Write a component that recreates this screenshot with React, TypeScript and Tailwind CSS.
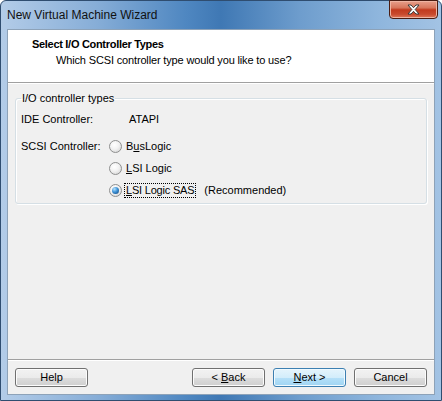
const font = "font-['Liberation_Sans',Arial,sans-serif]";

const Radio = ({ checked }: { checked?: boolean }) => (
  <span className="w-[13px] h-[13px] shrink-0 rounded-full border border-[#8e8f8f] bg-[radial-gradient(circle_at_40%_35%,#ffffff_0%,#f2f2f2_45%,#cdcdcd_100%)] flex items-center justify-center">
    {checked && (
      <span className="w-[7px] h-[7px] rounded-full bg-[radial-gradient(circle_at_35%_30%,#b4e2ff_0%,#3d92d6_45%,#0f3f73_100%)]" />
    )}
  </span>
);

const Button = ({
  children,
  primary,
}: {
  children: React.ReactNode;
  primary?: boolean;
}) => (
  <div
    className={
      primary
        ? "w-[73px] h-[19px] rounded-[3px] border border-[#3c7fb1] bg-[linear-gradient(#e5f4fc_0%,#d3edfb_50%,#b6e0f8_50%,#9fd5f3_100%)] shadow-[inset_0_0_0_1px_#f0faff] flex items-center justify-center text-[11px] leading-[13px] text-black whitespace-pre"
        : "w-[73px] h-[19px] rounded-[3px] border border-[#707070] bg-[linear-gradient(#f2f2f2_0%,#ebebeb_50%,#dddddd_50%,#cfcfcf_100%)] shadow-[inset_0_0_0_1px_#fcfcfc] flex items-center justify-center text-[11px] leading-[13px] text-black whitespace-pre"
    }
  >
    {children}
  </div>
);

export default function App() {
  return (
    <div
      className={`${font} w-[442px] h-[401px] flex flex-col rounded-t-[6px] border border-[#2f4d70] bg-[linear-gradient(90deg,#b3cce8_0%,#86add7_22%,#4f87c1_42%,#3f78b4_50%,#6e9dcd_68%,#8fb6dd_86%,#a3c3e4_100%)]`}
    >
      {/* title bar */}
      <div className="h-[28px] flex items-start justify-between">
        <span className="pl-[6px] pt-[7px] text-[12px] leading-[15px] text-[#111]">
          New Virtual Machine Wizard
        </span>
        <div className="mt-[-1px] mr-[3px] w-[49px] h-[19px] rounded-b-[4px] border border-[#4a1c12] bg-[linear-gradient(#e8a08c_0%,#d7765c_40%,#c23a1e_52%,#c84a2e_78%,#e0785a_100%)] shadow-[inset_0_0_0_1px_#eeb4a2] flex items-center justify-center">
          <svg width="13" height="11" viewBox="0 0 13 11">
            <path
              d="M1 1h3l2.5 2.7L9 1h3L8.2 5.5 12 10H9L6.5 7.3 4 10H1l3.8-4.5z"
              fill="#ffffff"
              stroke="#3a3a3a"
              strokeWidth="1"
              strokeLinejoin="round"
            />
          </svg>
        </div>
      </div>

      {/* client area */}
      <div className="flex-1 mx-[6px] mb-[5px] border border-[#8da2b8] bg-[#f0f0f0] flex flex-col">
        <div className="h-[53px] bg-white border-b border-[#a0a0a0] pl-[24px] pt-[8px] text-[11px] leading-[13px] text-black">
          <div className="font-bold tracking-[-0.3px]">Select I/O Controller Types</div>
          <div className="pl-[24px] mt-[3px] tracking-[-0.15px]">
            Which SCSI controller type would you like to use?
          </div>
        </div>

        <div className="flex-1 border-t border-white flex flex-col text-[11px] leading-[13px] text-black">
          <fieldset className="mt-[8px] mx-[7px] px-[5px] pt-[8px] pb-[6px] border border-[#d5dfe5] rounded-[3px] shadow-[inset_1px_1px_0_#ffffff,1px_1px_0_#ffffff]">
            <legend className="px-[1px]">I/O controller types</legend>
            <div className="flex">
              <span className="w-[108px]">IDE Controller:</span>
              <span>ATAPI</span>
            </div>
            <div className="flex mt-[14px]">
              <span className="w-[88px]">SCSI Controller:</span>
              <div className="flex flex-col gap-[9px]">
                <div className="flex items-center h-[13px]">
                  <Radio />
                  <span className="ml-[2px] px-[1px] border border-transparent">
                    B<span className="underline">u</span>sLogic
                  </span>
                </div>
                <div className="flex items-center h-[13px]">
                  <Radio />
                  <span className="ml-[2px] px-[1px] border border-transparent">
                    <span className="underline">L</span>SI Logic
                  </span>
                </div>
                <div className="flex items-center h-[13px]">
                  <Radio checked />
                  <span className="ml-[2px] px-[1px] border border-dotted border-black tracking-[-0.2px]">
                    <span className="underline">L</span>SI Logic SAS
                  </span>
                  <span className="ml-[8px]">(Recommended)</span>
                </div>
              </div>
            </div>
          </fieldset>

          <div className="flex-1" />

          <div className="border-t border-[#a0a0a0]">
            <div className="border-t border-white pt-[7px] pb-[7px] px-[7px] flex items-center">
              <Button>Help</Button>
              <div className="flex-1" />
              <div className="flex gap-[8px]">
                <Button>
                  {"< "}
                  <span className="underline">B</span>
                  {"ack"}
                </Button>
                <Button primary>
                  <span className="underline">N</span>
                  {"ext >"}
                </Button>
                <Button>Cancel</Button>
              </div>
            </div>
          </div>
        </div>
      </div>
    </div>
  );
}
